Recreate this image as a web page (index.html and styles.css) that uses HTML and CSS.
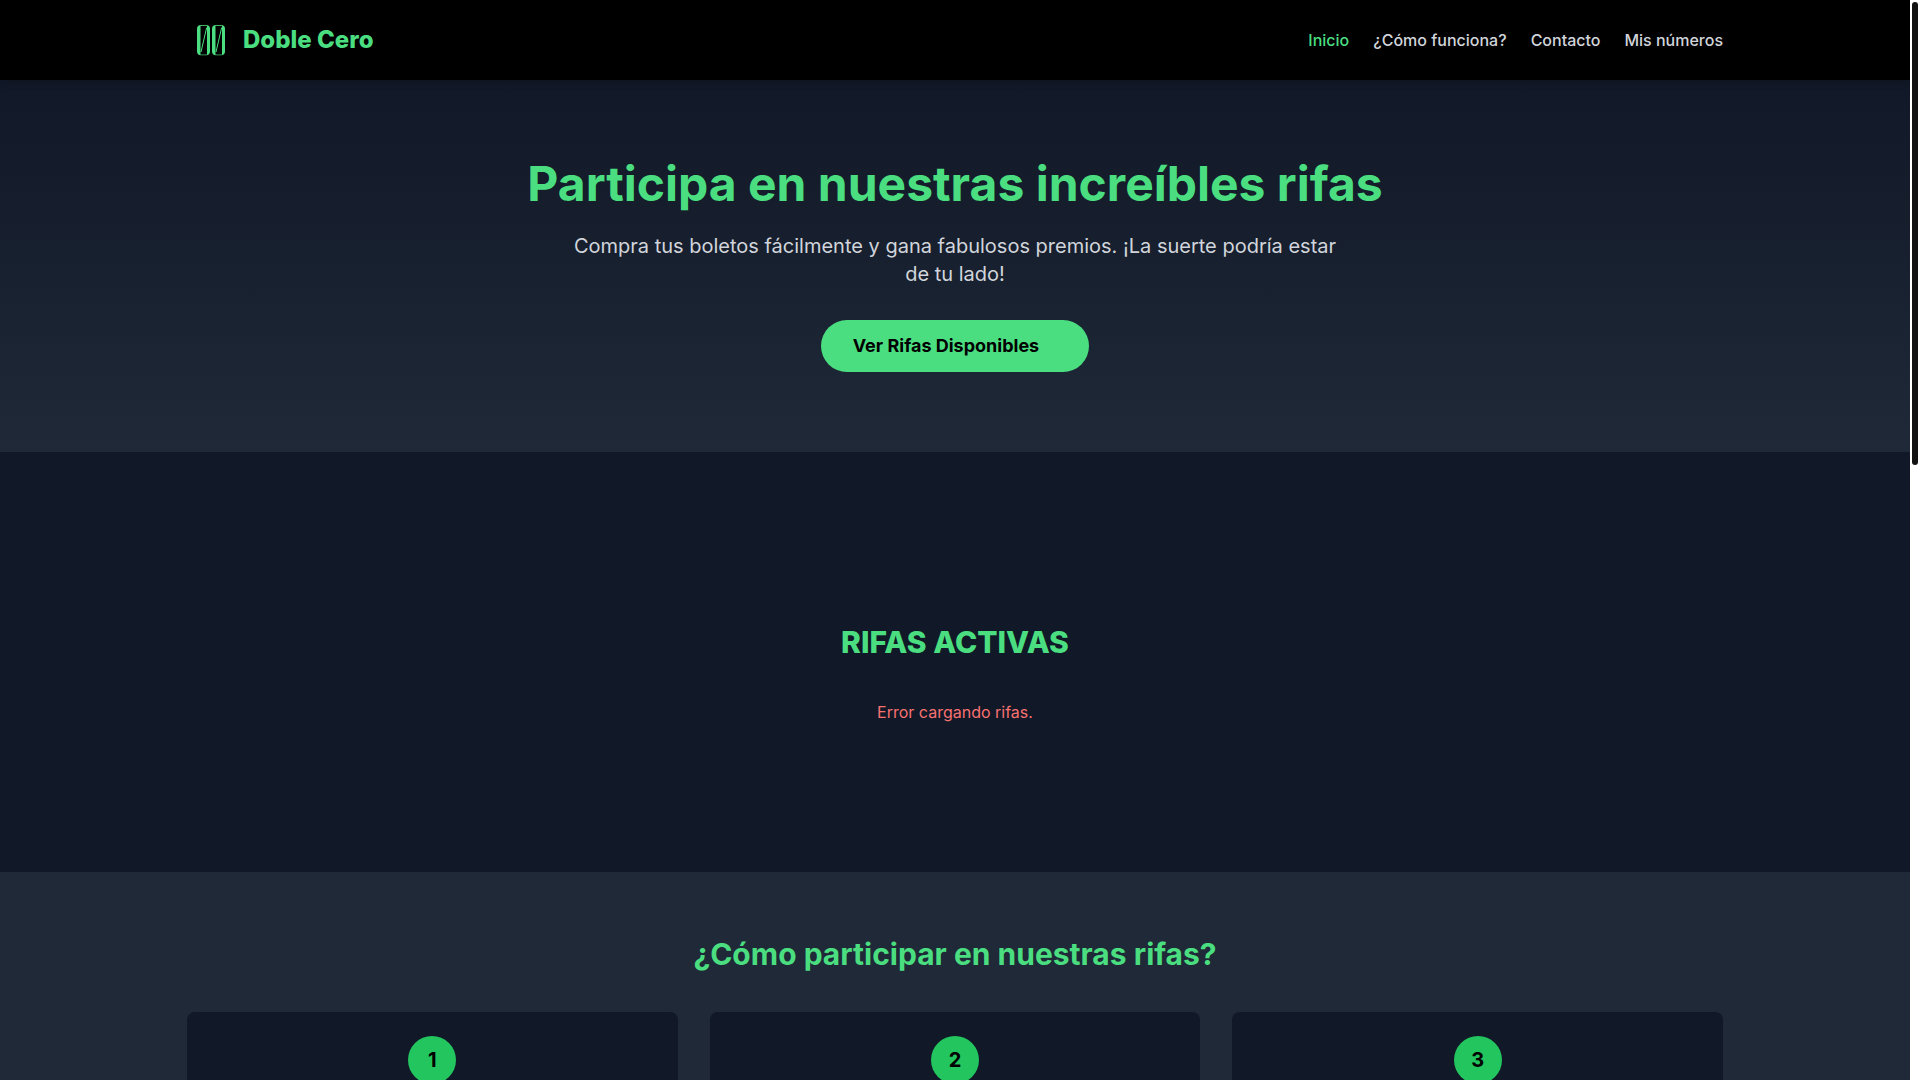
FILE: index.html
```
<!DOCTYPE html>
<html lang="es">
  <head>
    <meta charset="UTF-8" />
    <meta name="viewport" content="width=device-width, initial-scale=1.0" />
    <title>Doble Cero</title>
    <link rel="stylesheet" href="styles.css">
  </head>
  <body>
    <header class="header">
      <div class="container header-content">
        <a href="#" class="brand">
          <svg class="logo" viewBox="0 0 48 48" aria-hidden="true">
            <defs>
              <g id="zero">
                <rect x="10" y="9" width="13" height="30.200" rx="4" fill="#4ade80" />
                <path d="M13.500 9.800h6.500v28.800h-6.500z" fill="#000" />
                <path d="M19.700 11.500L14 36" stroke="#4ade80" stroke-width="1" />
              </g>
            </defs>
            <use href="#zero" />
            <use href="#zero" x="15" />
          </svg>
          <span>Doble Cero</span>
        </a>
        <nav class="nav">
          <a href="#" class="active">Inicio</a>
          <a href="#como-funciona">¿Cómo funciona?</a>
          <a href="#contacto">Contacto</a>
          <a href="#numeros">Mis números</a>
        </nav>
      </div>
    </header>

    <main>
      <section class="hero">
        <h1>Participa en nuestras increíbles rifas</h1>
        <p>Compra tus boletos fácilmente y gana fabulosos premios. ¡La suerte podría estar de tu lado!</p>
        <a href="#rifas" class="btn">Ver Rifas Disponibles</a>
      </section>

      <section class="rifas" id="rifas">
        <h2>RIFAS ACTIVAS</h2>
        <p class="error">Error cargando rifas.</p>
      </section>

      <section class="steps" id="como-funciona">
        <h2>¿Cómo participar en nuestras rifas?</h2>
        <div class="container steps-grid">
          <div class="card"><span class="number">1</span></div>
          <div class="card"><span class="number">2</span></div>
          <div class="card"><span class="number">3</span></div>
        </div>
      </section>
    </main>

    <div class="scrollbar" aria-hidden="true"><div class="thumb"></div></div>
  </body>
</html>
```

FILE: styles.css
```
* {
  box-sizing: border-box;
  margin: 0;
  padding: 0;
}
html {
  scrollbar-width: none;
}
body {
  font-family: Inter, sans-serif;
  font-size: 16px;
  line-height: 24px;
  padding-right: 10px;
  background-color: #111827;
  color: #fff;
}
a {
  text-decoration: none;
}
.container {
  width: 100%;
  max-width: 1536px;
  margin: 0 auto;
}

.header {
  position: relative;
  background-color: #000;
  padding: 16px 0;
  box-shadow: 0 4px 6px rgba(0, 0, 0, 0.1);
}
.header-content {
  display: flex;
  justify-content: space-between;
  align-items: center;
}
.brand {
  display: flex;
  align-items: center;
  gap: 8px;
  color: #4ade80;
  font-size: 24px;
  font-weight: 800;
}
.logo {
  width: 48px;
  height: 48px;
}
.nav {
  display: flex;
  gap: 24px;
}
.nav a {
  color: #d1d5db;
  font-weight: 500;
}
.nav a.active {
  color: #4ade80;
}

.hero {
  padding: 80px 16px;
  text-align: center;
  background: linear-gradient(to bottom, #111827, #1f2937);
}
.hero h1 {
  font-size: 48px;
  line-height: 48px;
  font-weight: 700;
  color: #4ade80;
  margin-bottom: 24px;
}
.hero p {
  max-width: 768px;
  margin: 0 auto 32px;
  font-size: 20px;
  line-height: 28px;
  color: #d1d5db;
}
.btn {
  display: flex;
  width: fit-content;
  margin: 0 auto;
  padding: 12px 50px 12px 32px;
  border-radius: 26px;
  background-color: #4ade80;
  color: #000;
  font-size: 18px;
  line-height: 28px;
  font-weight: 700;
}

h2 {
  font-size: 30px;
  line-height: 36px;
  color: #4ade80;
  text-align: center;
  margin-bottom: 40px;
}
.rifas {
  padding: 172px 16px 148px;
  text-align: center;
}
.rifas h2 {
  font-weight: 800;
}
.error {
  color: #f87171;
}

.steps {
  padding: 64px 0;
  background-color: #1f2937;
}
.steps-grid {
  display: grid;
  grid-template-columns: repeat(3, 1fr);
  gap: 32px;
}
.card {
  padding: 24px;
  border-radius: 8px;
  background-color: #111827;
}
.number {
  display: flex;
  align-items: center;
  justify-content: center;
  width: 48px;
  height: 48px;
  margin: 0 auto;
  border-radius: 50%;
  background-color: #22c55e;
  color: #000;
  font-size: 20px;
  font-weight: 700;
}

/* page scrollbar */
.scrollbar {
  position: fixed;
  top: 0;
  right: 0;
  bottom: 0;
  width: 10px;
  padding: 2px;
  background-color: #fff;
}
.thumb {
  height: 43%;
  border-radius: 3px;
  background-color: #121212;
}
```
